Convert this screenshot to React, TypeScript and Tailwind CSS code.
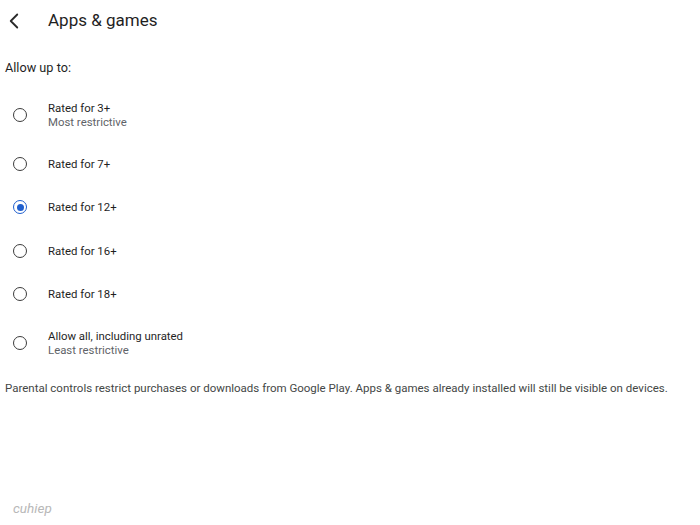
import { ChevronLeft } from 'lucide-react'
import clsx from 'clsx'

const options = [
  { label: 'Rated for 3+', sub: 'Most restrictive' },
  { label: 'Rated for 7+' },
  { label: 'Rated for 12+', checked: true },
  { label: 'Rated for 16+' },
  { label: 'Rated for 18+' },
  { label: 'Allow all, including unrated', sub: 'Least restrictive' },
]

function Radio({ checked }: { checked?: boolean }) {
  return (
    <span
      className={clsx(
        'w-[14px] h-[14px] rounded-full border-[1.6px] flex items-center justify-center shrink-0',
        checked ? 'border-[#1f5fce]' : 'border-[#3c3c3c]',
      )}
    >
      {checked && <span className="w-[7px] h-[7px] rounded-full bg-[#1f5fce]" />}
    </span>
  )
}

export default function App() {
  return (
    <div className="w-[700px] h-[525px] bg-white relative text-[#1f1f1f] font-['Roboto','Liberation_Sans',sans-serif]">
      <div className="h-[41px] flex items-center">
        <ChevronLeft className="w-[26px] h-[26px] ml-[1px] text-[#2a2a2a]" strokeWidth={1.7} />
        <h1 className="ml-[21px] text-[17px] leading-none">Apps &amp; games</h1>
      </div>
      <div className="h-[47px] flex items-center pt-[6px] px-[5px] text-[12.7px]">Allow up to:</div>
      <div>
        {options.map((o, i) => (
          <div
            key={i}
            className={clsx('flex items-center', o.sub ? 'h-[54px]' : 'h-[43.5px]')}
          >
            <div className="w-[48px] flex justify-center pl-[2px] pr-[10px]">
              <Radio checked={o.checked} />
            </div>
            <div>
              <div className="text-[11.4px] leading-[14px]">{o.label}</div>
              {o.sub && <div className="text-[11.4px] leading-[14px] text-[#5f6368]">{o.sub}</div>}
            </div>
          </div>
        ))}
      </div>
      <p className="px-[5px] mt-[10px] text-[11.5px] text-[#444746]">
        Parental controls restrict purchases or downloads from Google Play. Apps &amp; games already installed will still be visible on devices.
      </p>
      <span className="absolute left-[13px] top-[498px] italic text-[13.5px] text-[#b8b8b8]">cuhiep</span>
    </div>
  )
}
